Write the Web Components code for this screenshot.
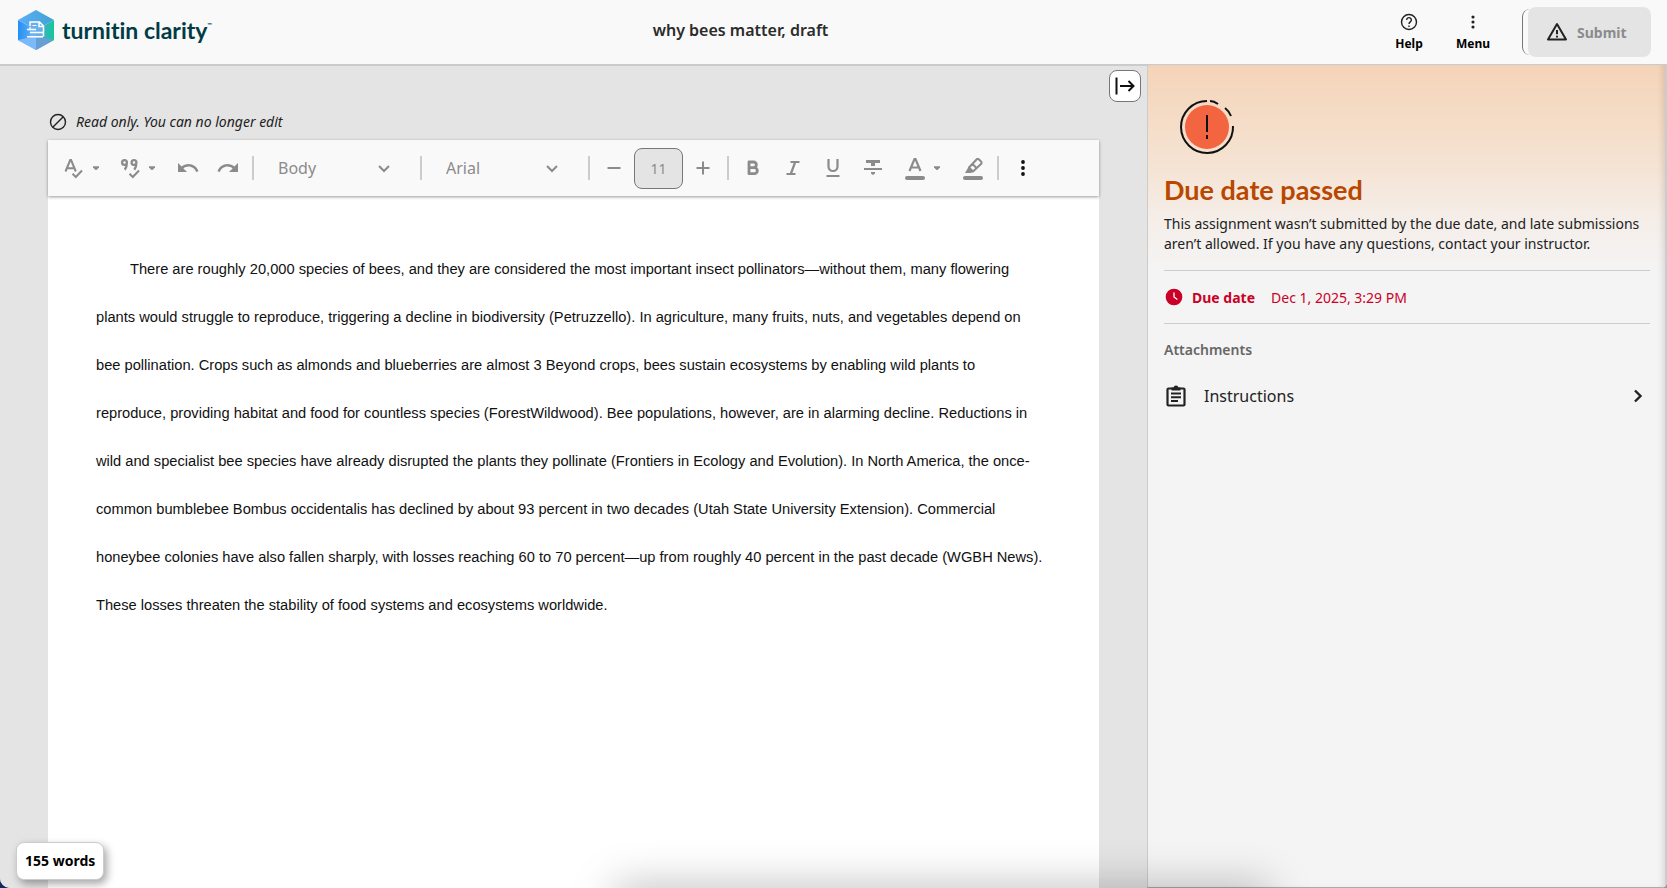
<!DOCTYPE html>
<html lang="en">
<head>
<meta charset="utf-8">
<meta name="viewport" content="width=device-width, initial-scale=1">
<title>why bees matter, draft</title>
<style>
html,body{margin:0;height:100%}
body{font-family:"Noto Sans",sans-serif;font-size:14px;color:#222;background:linear-gradient(90deg,#14285a 50%,#a88fa8 50%)}
</style>
</head>
<body>
<clarity-app></clarity-app>
<script>
const define = (name, html) => {
  const t = document.createElement('template');
  t.innerHTML = html;
  customElements.define(name, class extends HTMLElement {
    constructor() {
      super();
      this.attachShadow({mode: 'open'}).appendChild(t.content.cloneNode(true));
    }
  });
};
const reset = '*{box-sizing:border-box}button,input,select{font:inherit;color:inherit;margin:0;padding:0;border:0;background:none}svg{display:block}';

const icons = {
  help: '<circle cx="12" cy="12" r="9"/><path d="M9.2 9.6a2.8 2.8 0 1 1 4.6 2.1c-1 .8-1.8 1.300-1.800 2.600"/><path d="M12 16.200v1.800"/>',
  menu: '<g fill="currentColor" stroke="none"><circle cx="12" cy="6" r="1.900"/><circle cx="12" cy="12" r="1.900"/><circle cx="12" cy="18" r="1.900"/></g>',
  warn: '<path stroke-width="2" stroke-linejoin="round" d="M12 4 21 19.500H3z"/><path stroke-width="2" d="M12 10v4.200M12 15.800v1.700"/>',
  block: '<circle cx="12" cy="12" r="9"/><path d="M6 18 18 6"/>',
  spell: '<path stroke-width="2" d="M3.500 15.500 8.200 4h.9l4.700 11.500M5 12.200h7.300"/><path stroke-width="2" d="m10.500 17.800 3.300 3.200 6.200-6.500"/>',
  cite: '<path stroke-width="2.300" d="M8.900 6.500a2.400 2.400 0 1 1-4.800 0 2.400 2.400 0 0 1 4.800 0c0 3.400-.3 4.900-2.100 7.200M18.400 6.500a2.400 2.400 0 1 1-4.800 0 2.400 2.400 0 0 1 4.800 0c0 3.400-.3 4.900-2.100 7.200"/><path stroke-width="2" d="m11.500 17.800 3.300 3.200 6.200-6.500"/>',
  undo: '<path fill="currentColor" stroke="none" d="M12.500 8c-2.650 0-5.050.99-6.900 2.600L2 7v9h9l-3.620-3.620c1.390-1.160 3.160-1.880 5.120-1.880 3.540 0 6.550 2.310 7.600 5.500l2.370-.78C21.080 11.030 17.150 8 12.500 8z"/>',
  redo: '<path fill="currentColor" stroke="none" d="M18.400 10.600C16.550 8.990 14.150 8 11.500 8c-4.650 0-8.580 3.030-9.960 7.220L3.900 16c1.050-3.190 4.050-5.500 7.600-5.500 1.950 0 3.730.72 5.120 1.880L13 16h9V7l-3.600 3.600z"/>',
  caret: '<path fill="currentColor" stroke="none" d="M9 10.200h6v1.300L12.500 14h-1L9 11.500z"/>',
  down: '<path stroke-width="2" d="m7 10 5 5 5-5"/>',
  minus: '<path stroke-width="2" d="M5.500 12h13"/>',
  plus: '<path stroke-width="2" d="M5.500 12h13M12 5.500v13"/>',
  bold: '<path stroke-width="2.800" stroke-linejoin="round" d="M8 6h4.500a2.700 2.700 0 0 1 0 5.700H8zM8 11.700h5.300a3 3 0 0 1 0 6H8z"/>',
  italic: '<path stroke-width="2.200" d="M9.500 6h9M5.500 18h9M14.200 6l-4.400 12"/>',
  underline: '<path stroke-width="2.200" d="M7.500 3v7.500a4.500 4.500 0 0 0 9 0V3M5.500 20h13"/>',
  strike: '<path fill="currentColor" stroke="none" d="M5 4h14v3h-5v3h-4V7H5zM3 12h18v2H3zM10 16h4v1.500L12 19l-2-1.500z"/>',
  color: '<path stroke-width="2.200" d="M6.500 15 11.500 3h1l5 12M8.200 11.500h7.600"/><path stroke-width="4" stroke-linecap="round" d="M4 22h16"/>',
  marker: '<path stroke-width="2" stroke-linejoin="round" d="m8 11.500 8-8.500h1.500l3 3v1.500l-8.500 8zM11.500 8l4 4"/><path fill="currentColor" stroke="none" d="m7.500 11 5 5-3 1H4z"/><path stroke-width="4" stroke-linecap="round" d="M4 22h16"/>',
  collapse: '<path stroke-width="2" d="M3.500 3.500v17M7 12h13.500M15.500 7l5 5-5 5"/>',
  clock: '<circle cx="12" cy="12" r="10" fill="currentColor" stroke="none"/><path stroke="#fff" stroke-width="1.600" d="M12 6.500V12l4 3"/>',
  clip: '<rect x="3.500" y="4.500" width="17" height="17" rx="1" stroke-width="2.200"/><path stroke-width="2" d="M7 9.500h10M7 13.200h10M7 17h7"/><path fill="currentColor" stroke="none" d="M7.500 3.500h2a2.600 2.600 0 0 1 5 0h2v3h-9z"/>',
  right: '<path stroke-width="2.400" d="m9 6.500 5.500 5.500L9 17.500"/>'
};
customElements.define('c-icon', class extends HTMLElement {
  connectedCallback() {
    if (this.shadowRoot) return;
    const s = this.getAttribute('size') || 24;
    this.attachShadow({mode: 'open'}).innerHTML =
      `<style>:host{display:block;flex:none}svg{display:block;overflow:visible}</style><svg width="${s}" height="${s}" viewBox="0 0 24 24" fill="none" stroke="currentColor" stroke-width="1.700" aria-hidden="true">${icons[this.getAttribute('name')]}</svg>`;
  }
});

define('clarity-logo', `<style>${reset}
:host{display:flex;align-items:center;gap:8px;color:#003c46}
span{font:700 23px/32px Lato,sans-serif;font-variant-ligatures:none}
sup{font-size:6px;line-height:6px;vertical-align:12px}
</style>
<svg width="36" height="40" viewBox="0 0 36 40" aria-hidden="true">
<defs><linearGradient id="l" x1="0" x2="1"><stop offset="0" stop-color="#2490f4"/><stop offset="1" stop-color="#6fb4f6"/></linearGradient>
<linearGradient id="r" x1="0" x2="1"><stop offset="0" stop-color="#5f9fe0"/><stop offset="1" stop-color="#12c998"/></linearGradient>
<linearGradient id="t" x1="0" x2="1"><stop offset="0" stop-color="#5eaefa"/><stop offset="1" stop-color="#3fa3d2"/></linearGradient></defs>
<path fill="url(#l)" d="M0 10 18 20v20L0 30z"/><path fill="url(#r)" d="M36 10 18 20v20l18-10z"/><path fill="url(#t)" d="M18 0 36 10 18 20 0 10z"/><path fill="#7abafb" d="m18 26-18 4 18 10z"/><path fill="#659fd5" d="m18 26 18 4-18 10z"/>
<path fill="#6fb3f0" opacity=".7" d="m12 12 10-1 5 9-3 8H11z"/>
<path fill="none" stroke="#fff" stroke-width="1.500" d="M12 16v-4h9.500l4 4v10.500M21 12v4.500h4.500M9 19.500h9M12 22.500h14M9 26.700h16"/><path fill="none" stroke="#fff" stroke-width="1.200" d="M14.500 15.500h4M12 17v2"/></svg>
<span>turnitin clarity<sup>™</sup></span>`);

define('app-header', `<style>${reset}
:host{display:grid;grid-template-columns:1fr auto 1fr;align-items:center;height:65px;flex:none;padding:0 16px 0 18px;background:#f9f9f9;border-bottom:1px solid #c9cccd}
clarity-logo{margin-bottom:4px}
h1{font-size:16px;line-height:24px;font-weight:600;margin:0 188px 4px 0;color:#2b2b2b}
nav{display:flex;justify-content:flex-end;align-items:center}
.tool{width:64px;height:40px;display:flex;flex-direction:column;align-items:center;gap:4px;font-weight:700;font-size:12px;line-height:16px;color:#000}
.tool c-icon{color:#222}
.group{border-left:1px solid #777;border-radius:8px;margin-left:17px;padding-left:5px;height:46px;display:flex;align-items:center}
.submit{width:123px;height:50px;border-radius:8px;background:#e4e4e4;color:#8b8b8b;font-weight:700;display:flex;align-items:center;gap:8px;padding-left:17px}
.submit c-icon{color:#222}
</style>
<clarity-logo></clarity-logo><h1>why bees matter, draft</h1>
<nav><button class="tool"><c-icon name="help" size="20"></c-icon>Help</button><button class="tool"><c-icon name="menu" size="20"></c-icon>Menu</button>
<div class="group"><button class="submit" disabled><c-icon name="warn"></c-icon>Submit</button></div></nav>`);

customElements.define('tool-button', class extends HTMLElement {
  connectedCallback() {
    if (this.shadowRoot) return;
    this.attachShadow({mode: 'open'}).innerHTML = `<style>${reset}
:host{display:block;flex:none}button{display:flex;align-items:center;justify-content:center;width:100%;height:40px}
</style><button type="button" aria-label="${this.getAttribute('label')}"><slot></slot></button>`;
  }
});

define('tool-select', `<style>${reset}
:host{display:grid;align-items:center;grid-template-columns:1fr 24px}
::slotted(select){grid-area:1/1/2/3}
c-icon{grid-area:1/2;pointer-events:none}
</style><slot></slot><c-icon name="down"></c-icon>`);

define('editor-toolbar', `<style>${reset}
:host{display:flex;align-items:center;height:56px;flex:none;padding-left:12px;background:#f9f9f9;color:#8b8b8b;box-shadow:0 1px 3px rgba(0,0,0,.4);position:relative}
i{width:2px;height:24px;background:#ccc;flex:none}
.glyph{width:28px}.drop{width:16px}.key{width:40px}.wide{width:48px}.more{width:48px;color:#111}
.gap-s{margin-left:4px}.gap-m{margin-left:8px}.gap-l{margin-left:12px}
tool-select{width:118px;margin:0 24px}
select{appearance:none;font-size:16px;height:40px;width:100%;opacity:1}
input{width:49px;height:41px;border:1px solid #777;border-radius:8px;background:#e4e4e4;text-align:center;font-size:14px}
</style>
<tool-button class="glyph" label="Proofread"><c-icon name="spell"></c-icon></tool-button><tool-button class="drop" label="Proofread options"><c-icon name="caret"></c-icon></tool-button>
<tool-button class="glyph gap-l" label="Citations"><c-icon name="cite"></c-icon></tool-button><tool-button class="drop" label="Citation options"><c-icon name="caret"></c-icon></tool-button>
<tool-button class="key gap-m" label="Undo"><c-icon name="undo"></c-icon></tool-button><tool-button class="key" label="Redo"><c-icon name="redo"></c-icon></tool-button><i class="gap-s"></i>
<tool-select><select aria-label="Text style" disabled><option>Body</option></select></tool-select><i></i>
<tool-select><select aria-label="Font" disabled><option>Arial</option></select></tool-select><i></i>
<tool-button class="key gap-s" label="Decrease font size"><c-icon name="minus"></c-icon></tool-button><input aria-label="Font size" value="11" disabled><tool-button class="key" label="Increase font size"><c-icon name="plus"></c-icon></tool-button><i class="gap-s"></i>
<tool-button class="key gap-s" label="Bold"><c-icon name="bold"></c-icon></tool-button><tool-button class="key" label="Italic"><c-icon name="italic"></c-icon></tool-button><tool-button class="key" label="Underline"><c-icon name="underline"></c-icon></tool-button><tool-button class="key" label="Strikethrough"><c-icon name="strike"></c-icon></tool-button><tool-button class="glyph gap-m" label="Text colour"><c-icon name="color"></c-icon></tool-button><tool-button class="drop" label="Text colour options"><c-icon name="caret"></c-icon></tool-button>
<tool-button class="wide gap-s" label="Highlight"><c-icon name="marker"></c-icon></tool-button><i></i><tool-button class="more" label="More"><c-icon name="menu"></c-icon></tool-button>`);

define('editor-pane', `<style>${reset}
:host{display:flex;flex-direction:column;flex:1;min-width:0;padding:40px 48px 0;background:#e4e4e4;position:relative;border-top:1px solid #ccc}
.note{display:flex;align-items:center;gap:8px;height:32px;margin-bottom:2px;font-style:italic;line-height:20px}
article{flex:1;background:#fff;padding:49px 52px 0 48px;font:11pt/48px "Liberation Sans",Arial,sans-serif;color:#111}
p{margin:0;text-indent:34px}
.toggle{position:absolute;top:4px;right:6px;width:32px;height:32px;border:1px solid #777;border-radius:8px;background:#fff;display:flex;align-items:center;justify-content:center;color:#111}
.count{position:absolute;left:16px;bottom:8px;border:1px solid #ccc;border-radius:8px;background:#fff;padding:8px;line-height:20px;font-weight:700;color:#000;box-shadow:3px 4px 8px rgba(0,0,0,.35)}
</style>
<button class="toggle" aria-label="Collapse panel"><c-icon name="collapse"></c-icon></button>
<div class="note"><c-icon name="block" size="20"></c-icon><span>Read only. You can no longer edit</span></div>
<editor-toolbar></editor-toolbar>
<article><p>There are roughly 20,000 species of bees, and they are considered the most important insect pollinators—without them, many flowering plants would struggle to reproduce, triggering a decline in biodiversity (Petruzzello). In agriculture, many fruits, nuts, and vegetables depend on bee pollination. Crops such as almonds and blueberries are almost 3 Beyond crops, bees sustain ecosystems by enabling wild plants to reproduce, providing habitat and food for countless species (ForestWildwood). Bee populations, however, are in alarming decline. Reductions in wild and specialist bee species have already disrupted the plants they pollinate (Frontiers in Ecology and Evolution). In North America, the once-common bumblebee Bombus occidentalis has declined by about 93 percent in two decades (Utah State University Extension). Commercial honeybee colonies have also fallen sharply, with losses reaching 60 to 70 percent—up from roughly 40 percent in the past decade (WGBH News). These losses threaten the stability of food systems and ecosystems worldwide.</p></article>
<div class="count">155 words</div>`);

define('detail-panel', `<style>${reset}
:host{display:block;width:520px;flex:none;padding:23px 17px 0 16px;border-left:1px solid #ccc;border-bottom:1px solid #aaa;background:linear-gradient(#f5d4b8,#f5e3d3 100px,#f5ede7 150px,#f4f4f4 204px);box-shadow:inset -2px 0 0 #ccc,inset -7px 0 6px -3px rgba(0,0,0,.12)}
.status{margin:0 0 4px 8px}
h2{font:700 27px/40px Lato,sans-serif;color:#b94700;margin:0}
p{margin:4px 0 16px;line-height:20px}
.due{display:flex;align-items:center;border:solid #ccc;border-width:1px 0;height:54px;color:#cb0027;margin:0}
dt{font-weight:700;margin:0 16px 0 8px}dd{margin:0}
h3{font-size:14px;line-height:20px;color:#666;font-weight:600;margin:16px 0}
.row{display:flex;align-items:center;width:100%;height:40px;font-size:16px;text-align:left;color:#222;text-decoration:none}
.row span{flex:1;margin-left:16px}
</style>
<svg class="status" width="70" height="78" viewBox="-35 -39 70 78" aria-hidden="true"><circle r="22" fill="#f36440"/><g fill="none" stroke="#111" stroke-width="2"><path d="M26-1A26 26 0 1 1 0-26M3-26q4 0 8 3M18-19q4 3 6 8"/><path d="M0-12V5M0 8v4"/></g></svg>
<h2>Due date passed</h2>
<p>This assignment wasn’t submitted by the due date, and late submissions aren’t allowed. If you have any questions, contact your instructor.</p>
<dl class="due"><c-icon name="clock" size="20"></c-icon><dt>Due date</dt><dd>Dec 1, 2025, 3:29 PM</dd></dl>
<h3>Attachments</h3>
<a class="row" href="#instructions"><c-icon name="clip"></c-icon><span>Instructions</span><c-icon name="right"></c-icon></a>`);

define('clarity-app', `<style>${reset}
:host{display:flex;flex-direction:column;min-height:100vh;position:relative;overflow:hidden;border-radius:0 0 6px 10px;background:#e4e4e4}
main{display:flex;flex:1}
.dock{position:absolute;top:100%;left:37%;right:24%;height:40px;box-shadow:0 0 44px 2px rgba(0,0,0,.26);pointer-events:none}
</style>
<app-header></app-header><main><editor-pane></editor-pane><detail-panel></detail-panel></main><div class="dock"></div>`);
</script>
</body>
</html>
